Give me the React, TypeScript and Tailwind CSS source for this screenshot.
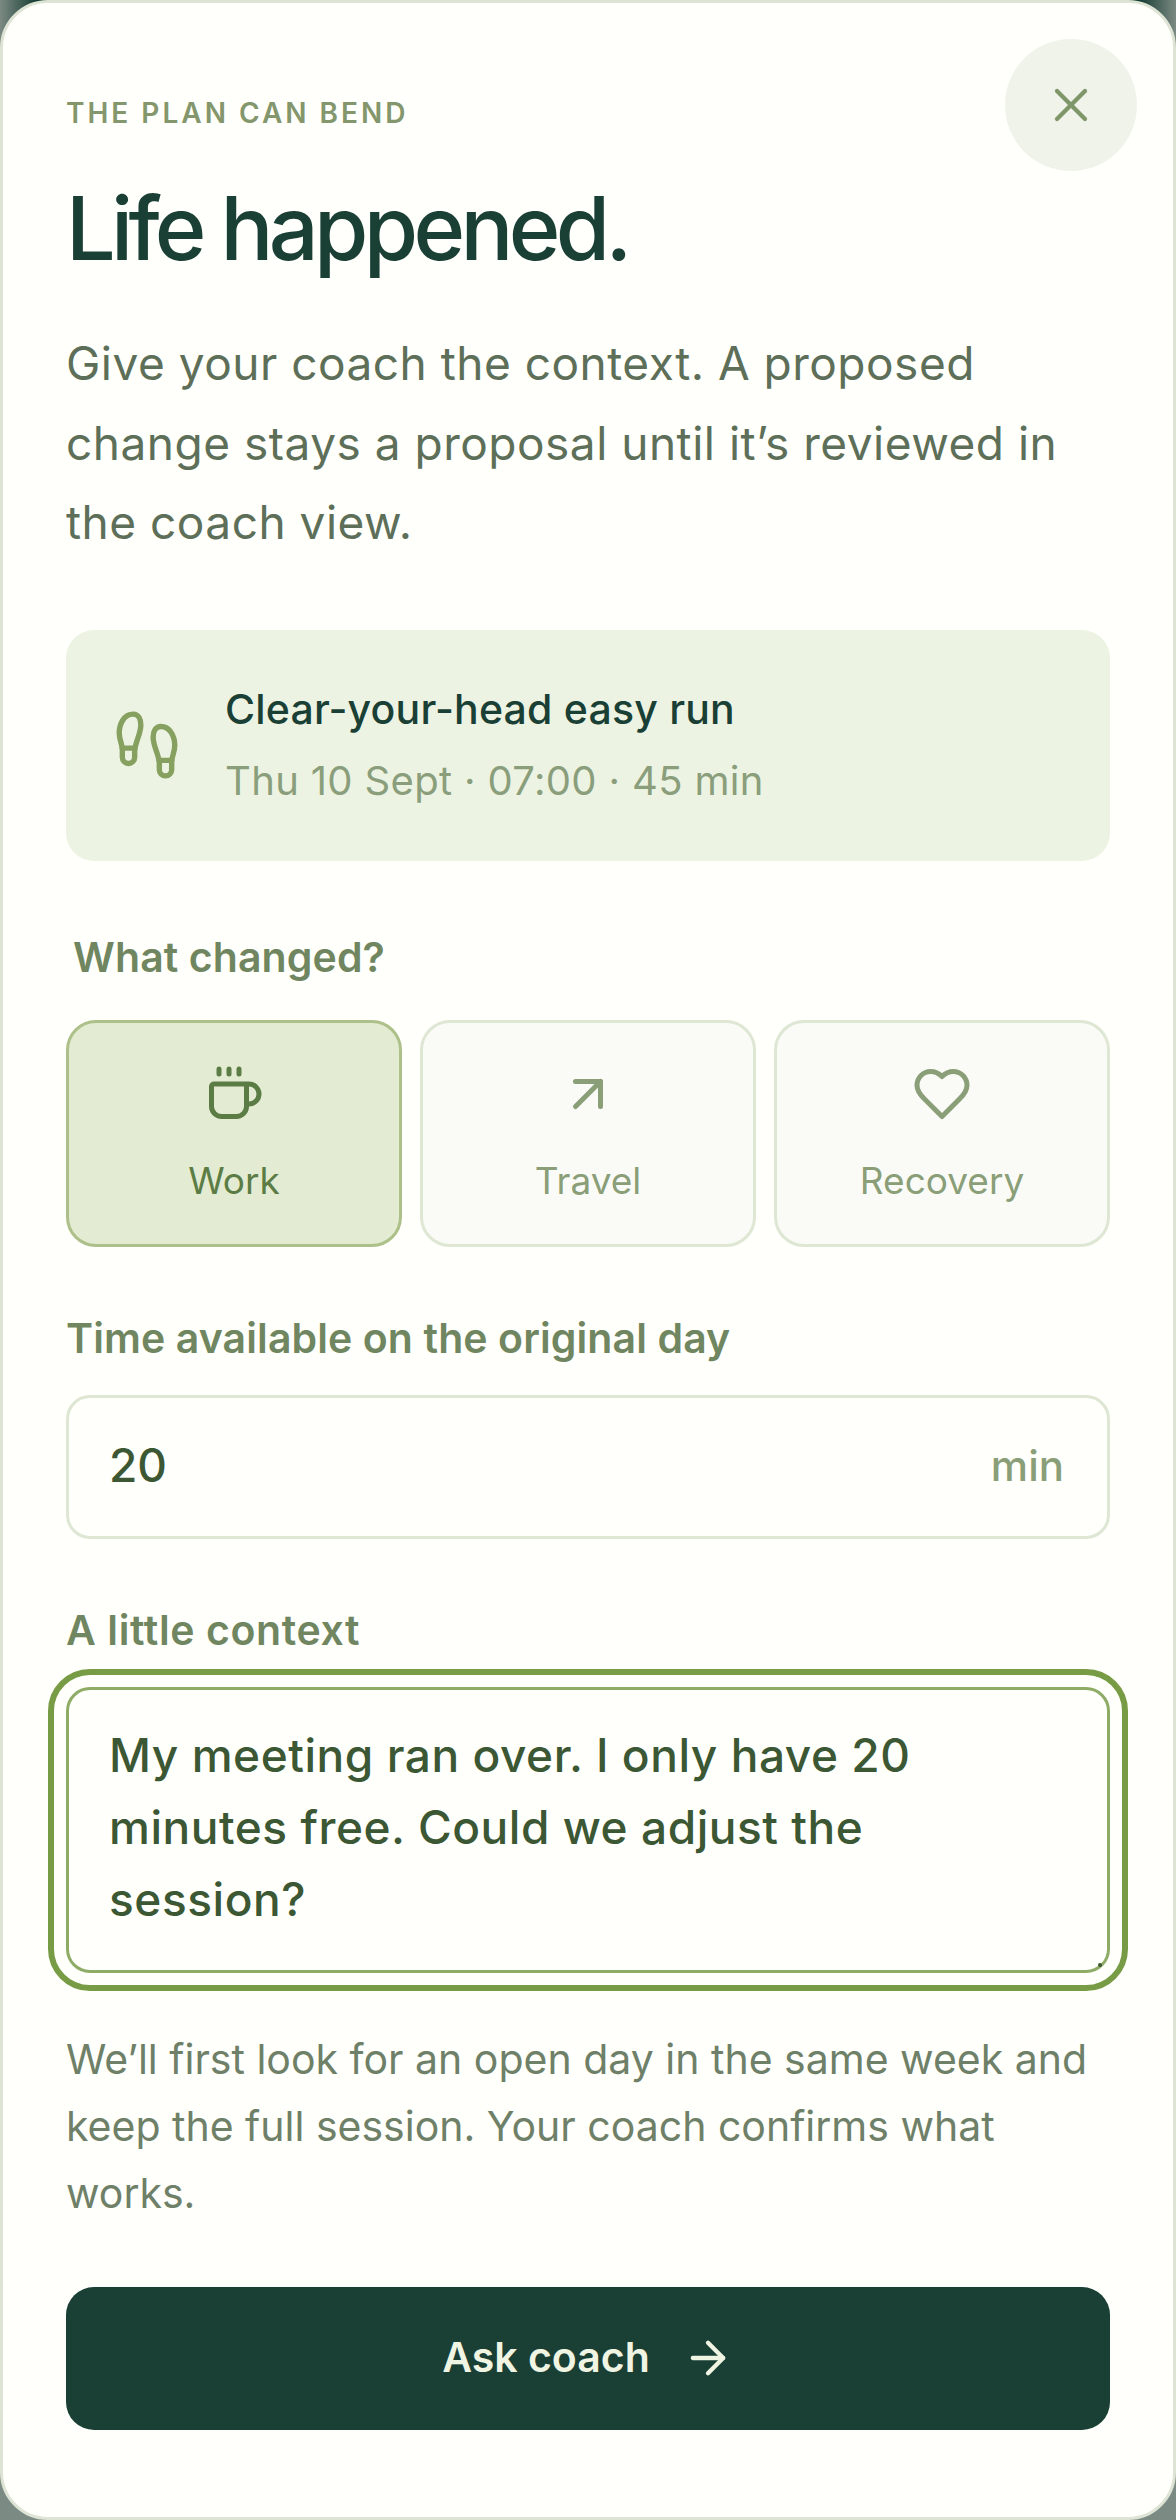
import { ArrowRight, ArrowUpRight, Coffee, Footprints, X } from "lucide-react"

// the older pointed lucide heart, the one in the package now is rounder
const HeartIcon = ({ size, strokeWidth }: { size: number; strokeWidth: number }) => (
  <svg width={size} height={size} viewBox="0 0 24 24" fill="none" stroke="currentColor" strokeWidth={strokeWidth} strokeLinecap="round" strokeLinejoin="round">
    <path d="M19 14c1.49-1.46 3-3.21 3-5.5A5.5 5.5 0 0 0 16.5 3c-1.76 0-3 .5-4.5 2-1.5-1.5-2.74-2-4.5-2A5.5 5.5 0 0 0 2 8.5c0 2.3 1.5 4.05 3 5.5l7 7Z" />
  </svg>
)

const chips = [
  { label: "Work", icon: Coffee, active: true },
  { label: "Travel", icon: ArrowUpRight, active: false },
  { label: "Recovery", icon: HeartIcon, active: false },
]

export default function App() {
  return (
    <div className="h-[2520px] w-[1176px] overflow-hidden bg-[#7b8a83] bg-[linear-gradient(to_right,#7b8a83,#1a3f35_3%,#1a3f35_97%,#7b8a83)] bg-[length:100%_60px] bg-no-repeat font-['Inter',sans-serif]">
      <div className="relative h-[2520px] rounded-[48px] border-[3px] border-[#dde4d4] bg-[#fffffb] px-[63px] pt-[93px]">
        <button className="absolute right-[36px] top-[36px] flex h-[132px] w-[132px] items-center justify-center rounded-full bg-[#eff3ea] text-[#7f9668]">
          <X size={56} strokeWidth={1.8} />
        </button>

        <p className="text-[28px] font-semibold leading-[34px] tracking-[3px] text-[#84966c]">THE PLAN CAN BEND</p>
        <h1 className="mt-[48px] text-[88px] font-medium leading-[100px] tracking-[-4.7px] text-[#1a3f35]">Life happened.</h1>
        <p className="mt-[46px] w-[1020px] text-[46px] leading-[79.5px] tracking-[0.5px] text-[#5d6f58]">
          Give your coach the context. A proposed change stays a proposal until it’s reviewed in the coach view.
        </p>

        <div className="mt-[67px] flex h-[231px] items-center gap-[41px] rounded-[28px] bg-[#edf3e2] pl-[44px]">
          <Footprints size={74} strokeWidth={1.75} className="text-[#86a060]" />
          <div>
            <p className="text-[41px] font-medium leading-[50px] tracking-[0.2px] text-[#1a3f35]">Clear-your-head easy run</p>
            <p className="mt-[22px] text-[40px] leading-[50px] tracking-[0.34px] text-[#8a9e7c]">Thu 10 Sept · 07:00 · 45 min</p>
          </div>
        </div>

        <p className="mt-[71px] pl-[7px] text-[41px] font-semibold leading-[50px] tracking-[0.1px] text-[#708660]">What changed?</p>

        <div className="mt-[38px] grid grid-cols-3 gap-[18px]">
          {chips.map((chip) => {
            const Icon = chip.icon
            return (
              <div
                key={chip.label}
                className={
                  chip.active
                    ? "flex h-[227px] flex-col items-center rounded-[30px] border-[3px] border-[#aec08a] bg-[#e3ecd2] pt-[41px] text-[#5c7c45]"
                    : "flex h-[227px] flex-col items-center rounded-[30px] border-[3px] border-[#dee6d4] bg-[#fafbf6] pt-[41px] text-[#8a9e78]"
                }
              >
                <Icon size={60} strokeWidth={2} />
                <span className="mt-[32px] text-[37px] leading-[50px]">{chip.label}</span>
              </div>
            )
          })}
        </div>

        <p className="mt-[66px] text-[41px] font-semibold leading-[50px] tracking-[0.1px] text-[#708660]">Time available on the original day</p>
        <div className="mt-[32px] flex h-[144px] items-center justify-between rounded-[24px] border-[3px] border-[#dee6d4] pl-[40px] pr-[43px]">
          <span className="mb-[2px] text-[46px] font-medium text-[#3b5733]">20</span>
          <span className="mb-[2px] text-[42px] font-medium text-[#8a9e78]">min</span>
        </div>

        <p className="mt-[66px] text-[41px] font-semibold leading-[50px] tracking-[0.6px] text-[#708660]">A little context</p>
        <div className="relative mt-[32px] h-[286px] rounded-[24px] border-[3px] border-[#8fac67] pl-[40px] pr-[100px] pt-[29px] text-[46px] font-medium leading-[72px] tracking-[0.55px] text-[#3b5733] outline-[6px] outline-offset-[12px] outline-[#789b45]">
          My meeting ran over. I only have 20 minutes free. Could we adjust the session?
          <span className="absolute bottom-[3px] right-[5px] h-[4px] w-[4px] rounded-full bg-[#3b5733]" />
        </div>

        <p className="mt-[53px] text-[41px] leading-[67px] text-[#6f8068]">
          We’ll first look for an open day in the same week and keep the full session. Your coach confirms what works.
        </p>

        <button className="mt-[60px] flex h-[143px] w-full items-center justify-center gap-[32px] rounded-[28px] bg-[#1a3f35] text-[41px] font-semibold text-[#f0f4e3]">
          Ask coach
          <ArrowRight size={52} strokeWidth={2} />
        </button>
      </div>
    </div>
  )
}
